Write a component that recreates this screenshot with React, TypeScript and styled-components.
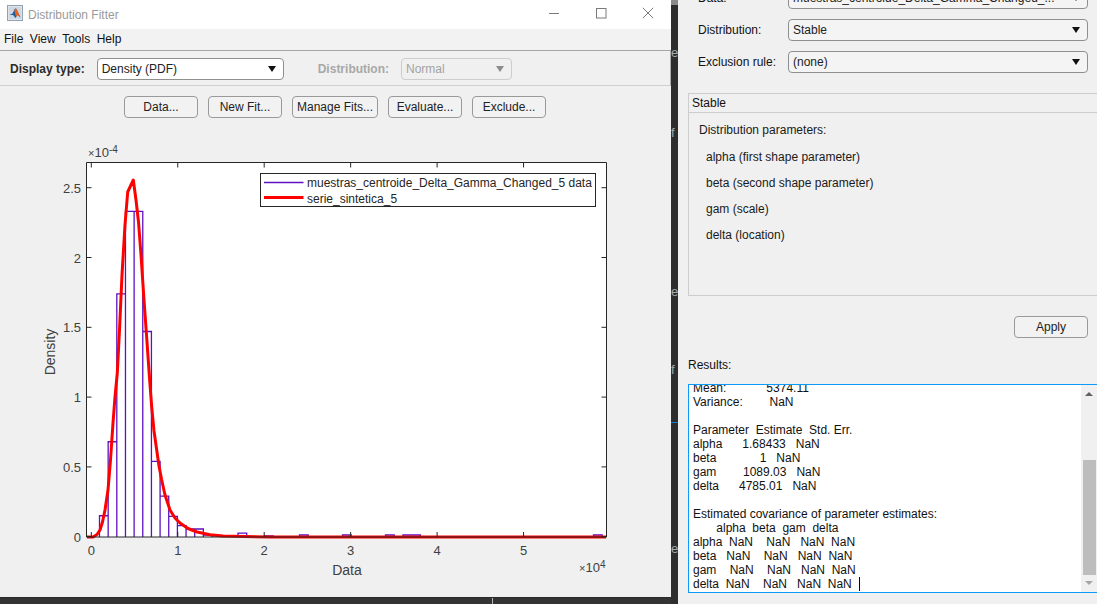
import React from 'react';
import styled, { createGlobalStyle } from 'styled-components';

const GlobalStyle = createGlobalStyle`
  html, body {
    margin: 0;
    padding: 0;
    width: 1097px;
    height: 604px;
    overflow: hidden;
    background: #2d2d2d;
  }
  body {
    font-family: 'Liberation Sans', Arial, sans-serif;
    font-size: 12px;
    color: #111;
  }
`;

const Page = styled.div`
  display: flex;
  width: 1097px;
  height: 604px;
  overflow: hidden;
`;

const LeftColumn = styled.div`
  display: flex;
  flex-direction: column;
  width: 671px;
  flex: none;
`;

const FitterWindow = styled.div`
  display: flex;
  flex-direction: column;
  height: 597px;
  background: #f0f0f0;
`;

const TitleBar = styled.div`
  display: flex;
  align-items: center;
  height: 29px;
  padding: 0 0 3px 7px;
  box-sizing: border-box;
  background: #fff;
  flex: none;
`;

const TitleText = styled.span`
  margin-left: 5px;
  margin-top: 4px;
  color: #9a9a9a;
  font-size: 12px;
`;

const WindowControls = styled.div`
  display: flex;
  margin-left: auto;
  margin-right: 17px;
  gap: 35px;
`;

const MenuBar = styled.div`
  display: flex;
  align-items: center;
  gap: 6.5px;
  height: 22px;
  padding: 0 0 1px 4px;
  box-sizing: border-box;
  background: #f2f2f2;
  border-bottom: 1px solid #a6a6a6;
  flex: none;
`;

const MenuItem = styled.span`
  color: #111;
`;

const Toolbar = styled.div`
  display: flex;
  align-items: center;
  height: 35px;
  padding: 1px 0 0 10px;
  box-sizing: border-box;
  border-bottom: 1px solid #cfcfcf;
  border-right: 1px solid #ababab;
  flex: none;
`;

const ToolbarLabel = styled.span<{ $disabled?: boolean; $gap?: number }>`
  font-weight: bold;
  color: ${p => (p.$disabled ? '#a8a8a8' : '#2b2b2b')};
  margin-left: ${p => p.$gap ?? 0}px;
`;

const Select = styled.div<{ $width: number; $gap?: number; $disabled?: boolean; $soft?: boolean }>`
  display: flex;
  align-items: center;
  width: ${p => p.$width}px;
  height: 22px;
  margin-left: ${p => p.$gap ?? 0}px;
  padding: 0 7px 0 4px;
  box-sizing: border-box;
  border: 1px solid ${p => (p.$disabled ? '#cdcdcd' : '#8f8f8f')};
  border-radius: 4px;
  background: ${p => (p.$disabled ? '#f0f0f0' : p.$soft ? '#f4f4f4' : '#fff')};
  color: ${p => (p.$disabled ? '#a3a3a3' : '#222')};
  flex: none;
`;

const SelectValue = styled.span`
  flex: 1;
  min-width: 0;
  white-space: nowrap;
  overflow: hidden;
`;

const Caret = styled.span<{ $disabled?: boolean }>`
  width: 0;
  height: 0;
  border-left: 4.5px solid transparent;
  border-right: 4.5px solid transparent;
  border-top: 6px solid ${p => (p.$disabled ? '#8c8c8c' : '#111')};
  flex: none;
`;

const ButtonRow = styled.div`
  display: flex;
  justify-content: center;
  gap: 10px;
  padding: 10px 1px 0 0;
  flex: none;
`;

const PushButton = styled.div<{ $width?: number }>`
  display: flex;
  align-items: center;
  justify-content: center;
  width: ${p => p.$width ?? 74}px;
  height: 22px;
  box-sizing: border-box;
  border: 1px solid #9a9a9a;
  border-radius: 4px;
  background: #f2f2f2;
  color: #222;
`;

const ChartSvg = styled.svg`
  display: block;
  margin-top: 7px;
  flex: none;
`;

const TickLabel = styled.text`
  font-family: 'Liberation Sans', Arial, sans-serif;
  font-size: 13px;
  fill: #404040;
`;

const AxisLabel = styled.text`
  font-family: 'Liberation Sans', Arial, sans-serif;
  font-size: 14px;
  fill: #404040;
`;

const LegendText = styled.text`
  font-family: 'Liberation Sans', Arial, sans-serif;
  font-size: 12px;
  fill: #262626;
`;

const BottomStrip = styled.div`
  flex: 1;
  background: #333;
  border-top: 1px solid #2a2a2a;
`;

const Gutter = styled.div`
  width: 7px;
  flex: none;
  background: #2d2d2d;
  overflow: hidden;
`;

const GutterThumb = styled.div`
  height: 5px;
  background: #8a8a8a;
`;

const GutterGlyph = styled.div<{ $top: number }>`
  margin-top: ${p => p.$top}px;
  height: 14px;
  line-height: 14px;
  color: #a8a8a8;
  font-size: 13px;
`;

const GutterMark = styled.div<{ $top: number }>`
  margin-top: ${p => p.$top}px;
  height: 1px;
  background: #0b7fd0;
`;

const StripLine = styled.div`
  width: 1px;
  height: 100%;
  margin-left: 492px;
  background: #b5b5b5;
`;

const RightPanel = styled.div`
  flex: 1;
  min-width: 0;
  display: flex;
  flex-direction: column;
  padding-left: 10px;
  background: #f0f0f0;
  overflow: hidden;
`;

const FormRows = styled.div`
  display: flex;
  flex-direction: column;
  gap: 10px;
  margin-top: -13px;
  padding-left: 10px;
  flex: none;
`;

const FormRow = styled.div`
  display: flex;
  align-items: center;
`;

const FormLabel = styled.span`
  width: 90px;
  flex: none;
  color: #111;
`;

const ParamBox = styled.div`
  width: 412px;
  height: 203px;
  margin-top: 20px;
  box-sizing: border-box;
  border: 1px solid #cdcdcd;
  flex: none;
`;

const ParamHeader = styled.div`
  height: 19px;
  line-height: 18px;
  padding-left: 3px;
  box-sizing: border-box;
  border-bottom: 1px solid #cdcdcd;
`;

const ParamBody = styled.div`
  padding: 4px 0 0 10px;
`;

const ParamHeading = styled.div`
  height: 27px;
  line-height: 26px;
  color: #1a1a1a;
`;

const ParamLine = styled.div`
  height: 26px;
  line-height: 26px;
  padding-left: 7px;
  color: #1a1a1a;
`;

const ApplyRow = styled.div`
  display: flex;
  justify-content: flex-end;
  margin-top: 20px;
  padding-right: 9px;
  flex: none;
`;

const ResultsLabel = styled.div`
  height: 14px;
  line-height: 14px;
  margin-top: 20px;
  flex: none;
`;

const ResultsBox = styled.div`
  display: flex;
  width: 412px;
  height: 209px;
  margin-top: 12px;
  box-sizing: border-box;
  border: 1px solid #0c9bfa;
  flex: none;
`;

const ResultsText = styled.pre`
  flex: 1;
  margin: 0;
  padding: 0 0 0 4px;
  background: #fff;
  overflow: hidden;
  font-family: 'Liberation Sans', Arial, sans-serif;
  font-size: 12px;
  line-height: 14px;
  white-space: pre;
  color: #111;

  & > div:first-child {
    margin-top: -4px;
  }
`;

const TextCursor = styled.span`
  display: inline-block;
  width: 1px;
  height: 14px;
  margin-left: 7px;
  vertical-align: -3px;
  background: #000;
`;

const ScrollTrack = styled.div`
  display: flex;
  flex-direction: column;
  align-items: center;
  width: 18px;
  background: #f0f0f0;
  flex: none;
  padding-right: 2px;
  box-sizing: border-box;
`;

const ScrollArrow = styled.span<{ $down?: boolean; $top: number }>`
  width: 0;
  height: 0;
  margin-top: ${p => p.$top}px;
  border-left: 4px solid transparent;
  border-right: 4px solid transparent;
  ${p =>
    p.$down
      ? 'border-top: 4px solid #a6a6a6;'
      : 'border-bottom: 4px solid #606060;'}
`;

const ScrollThumb = styled.div`
  width: 13px;
  height: 115px;
  margin-top: 64px;
  background: #bdbdbd;
`;

// chart scales, read off the reference
const xAt = (v: number) => 91.3 + 86.45 * v;
const yAt = (v: number) => 536.7 - 139.6 * v;
const binX = (i: number) => 99.5 + 8.655 * i;

const mainBins = [0.15, 0.68, 1.74, 2.33, 2.33, 1.47, 0.54, 0.29, 0.145, 0.08, 0.055, 0.055, 0.012, 0.008, 0.006, 0.004];
// sparse tail of the histogram: [left edge in px, width in px, density]
const tailBins: [number, number, number][] = [
  [229.5, 8.6, 0.006],
  [238, 8.7, 0.025],
  [264.5, 8.7, 0.006],
  [299.5, 8.7, 0.012],
  [342.5, 8.7, 0.012],
  [385.5, 8.7, 0.012],
  [403, 17.4, 0.012],
  [593.5, 8.7, 0.012],
];

const redCurve: [number, number][] = [
  [87, 537], [93, 537], [97, 534.5], [100, 530], [102.5, 522], [105, 510], [108, 490], [110.5, 460], [113, 423],
  [115, 397], [117.3, 373], [119.5, 330], [122, 275], [125, 225], [127.7, 192], [133.3, 180], [136, 200],
  [138.5, 222], [141, 255], [144, 300], [147, 342], [149.5, 378], [151.7, 407], [154, 431], [156.7, 450],
  [159, 466], [161.7, 480], [165, 495], [170, 510], [175, 518], [180, 523], [188, 528.5], [197, 532],
  [210, 534.8], [223, 536], [245, 536.6], [270, 537], [606, 537],
];

const histogramPath = () => {
  const parts = mainBins.map((h, i) => {
    const l = binX(i);
    const r = binX(i + 1);
    return `M${l} 537V${yAt(h)}H${r}V537`;
  });
  tailBins.forEach(([l, w, h]) => parts.push(`M${l} 537V${yAt(h)}H${l + w}V537`));
  return parts.join('');
};

const MatlabIcon = () => (
  <svg width="16" height="16" viewBox="0 0 16 16">
    <rect x="0.5" y="0.5" width="15" height="15" fill="#eef1f4" stroke="#8fa3b5" />
    <rect x="1.5" y="1.5" width="13" height="13" fill="#cfd8e0" />
    <path d="M2.5 10L5.5 8.5L8 3.5L9.5 4L13.5 12.5L10.5 10L8.5 13L6 10Z" fill="#1f5f9e" />
    <path d="M8 3.5L9.5 4L13.5 12.5L10.5 10L9 11.5L7.5 6Z" fill="#e8641e" />
  </svg>
);

const WindowGlyph = ({ kind }: { kind: 'min' | 'max' | 'close' }) => (
  <svg width="12" height="12" viewBox="0 0 12 12" fill="none" stroke="#7a7a7a" strokeWidth="1">
    {kind === 'min' && <path d="M1 6.5H11" />}
    {kind === 'max' && <rect x="1.5" y="1.5" width="9.5" height="9.5" />}
    {kind === 'close' && <path d="M0.8 0.8L11.2 11.2M11.2 0.8L0.8 11.2" />}
  </svg>
);

const Chart = () => (
  <ChartSvg width="671" height="472" viewBox="0 125 671 472">
    <rect x="86.5" y="162.5" width="520" height="374.5" fill="#fff" />
    <path d={histogramPath()} fill="none" stroke="#5f10c0" strokeWidth="1.3" />
    <polyline
      points={redCurve.map(p => p.join(',')).join(' ')}
      fill="none"
      stroke="#ff0000"
      strokeWidth="3"
      strokeLinejoin="round"
    />
    <path d="M86.5 162.5H606.5V537M86.5 162.5V537H606.5" fill="none" stroke="#262626" strokeWidth="1" />
    {[0, 1, 2, 3, 4, 5].map(v => (
      <React.Fragment key={v}>
        <path d={`M${xAt(v)} 537v-5M${xAt(v)} 162.5v5`} stroke="#262626" fill="none" />
        <TickLabel x={xAt(v)} y="555" textAnchor="middle">{v}</TickLabel>
      </React.Fragment>
    ))}
    {[0, 0.5, 1, 1.5, 2, 2.5].map(v => (
      <React.Fragment key={v}>
        <path d={`M86.5 ${yAt(v)}h5M606.5 ${yAt(v)}h-5`} stroke="#262626" fill="none" />
        <TickLabel x="81" y={yAt(v) + 5} textAnchor="end">{v}</TickLabel>
      </React.Fragment>
    ))}
    <TickLabel x="88" y="157">
      <tspan fontSize="11">×</tspan>10<tspan fontSize="10" dy="-4">-4</tspan>
    </TickLabel>
    <TickLabel x="579" y="572">
      <tspan fontSize="11">×</tspan>10<tspan fontSize="10" dy="-4">4</tspan>
    </TickLabel>
    <AxisLabel x="347" y="575" textAnchor="middle">Data</AxisLabel>
    <AxisLabel x="55" y="352" textAnchor="middle" transform="rotate(-90 55 352)">Density</AxisLabel>
    <rect x="260.5" y="173.5" width="335" height="33" fill="#fff" stroke="#262626" />
    <path d="M264 182.5H303.5" stroke="#5f10c0" strokeWidth="1.3" fill="none" />
    <path d="M264 197.5H303.5" stroke="#ff0000" strokeWidth="3" fill="none" />
    <LegendText x="307" y="187">muestras_centroide_Delta_Gamma_Changed_5 data</LegendText>
    <LegendText x="307" y="203">serie_sintetica_5</LegendText>
  </ChartSvg>
);

const resultLines = [
  'Mean:            5374.11',
  'Variance:        NaN',
  ' ',
  'Parameter  Estimate  Std. Err.',
  'alpha      1.68433   NaN',
  'beta             1   NaN',
  'gam        1089.03   NaN',
  'delta      4785.01   NaN',
  ' ',
  'Estimated covariance of parameter estimates:',
  '       alpha  beta  gam  delta',
  'alpha  NaN    NaN   NaN  NaN',
  'beta   NaN    NaN   NaN  NaN',
  'gam    NaN    NaN   NaN  NaN',
];

const App: React.FC = () => (
  <Page>
    <GlobalStyle />
    <LeftColumn>
      <FitterWindow>
        <TitleBar>
          <MatlabIcon />
          <TitleText>Distribution Fitter</TitleText>
          <WindowControls>
            <WindowGlyph kind="min" />
            <WindowGlyph kind="max" />
            <WindowGlyph kind="close" />
          </WindowControls>
        </TitleBar>
        <MenuBar>
          <MenuItem>File</MenuItem>
          <MenuItem>View</MenuItem>
          <MenuItem>Tools</MenuItem>
          <MenuItem>Help</MenuItem>
        </MenuBar>
        <Toolbar>
          <ToolbarLabel>Display type:</ToolbarLabel>
          <Select $width={187} $gap={12}>
            <SelectValue>Density (PDF)</SelectValue>
            <Caret />
          </Select>
          <ToolbarLabel $disabled $gap={34}>Distribution:</ToolbarLabel>
          <Select $width={111} $gap={12} $disabled>
            <SelectValue>Normal</SelectValue>
            <Caret $disabled />
          </Select>
        </Toolbar>
        <ButtonRow>
          <PushButton>Data...</PushButton>
          <PushButton>New Fit...</PushButton>
          <PushButton $width={86}>Manage Fits...</PushButton>
          <PushButton>Evaluate...</PushButton>
          <PushButton>Exclude...</PushButton>
        </ButtonRow>
        <Chart />
      </FitterWindow>
      <BottomStrip>
        <StripLine />
      </BottomStrip>
    </LeftColumn>

    <Gutter>
      <GutterThumb />
      <GutterGlyph $top={41}>e</GutterGlyph>
      <GutterGlyph $top={66}>f</GutterGlyph>
      <GutterGlyph $top={145}>e</GutterGlyph>
      <GutterGlyph $top={64}>f</GutterGlyph>
      <GutterMark $top={45} />
      <GutterGlyph $top={119}>e</GutterGlyph>
    </Gutter>

    <RightPanel>
      <FormRows>
        <FormRow>
          <FormLabel>Data:</FormLabel>
          <Select $width={300} $soft>
            <SelectValue>muestras_centroide_Delta_Gamma_Changed_...</SelectValue>
            <Caret />
          </Select>
        </FormRow>
        <FormRow>
          <FormLabel>Distribution:</FormLabel>
          <Select $width={300} $soft>
            <SelectValue>Stable</SelectValue>
            <Caret />
          </Select>
        </FormRow>
        <FormRow>
          <FormLabel>Exclusion rule:</FormLabel>
          <Select $width={300} $soft>
            <SelectValue>(none)</SelectValue>
            <Caret />
          </Select>
        </FormRow>
      </FormRows>

      <ParamBox>
        <ParamHeader>Stable</ParamHeader>
        <ParamBody>
          <ParamHeading>Distribution parameters:</ParamHeading>
          <ParamLine>alpha (first shape parameter)</ParamLine>
          <ParamLine>beta (second shape parameter)</ParamLine>
          <ParamLine>gam (scale)</ParamLine>
          <ParamLine>delta (location)</ParamLine>
        </ParamBody>
      </ParamBox>

      <ApplyRow>
        <PushButton>Apply</PushButton>
      </ApplyRow>

      <ResultsLabel>Results:</ResultsLabel>
      <ResultsBox>
        <ResultsText>
          {resultLines.map((line, i) => (
            <div key={i}>{line}</div>
          ))}
          <div>
            delta  NaN    NaN   NaN  NaN
            <TextCursor />
          </div>
        </ResultsText>
        <ScrollTrack>
          <ScrollArrow $top={7} />
          <ScrollThumb />
          <ScrollArrow $down $top={6} />
        </ScrollTrack>
      </ResultsBox>
    </RightPanel>
  </Page>
);

export default App;
